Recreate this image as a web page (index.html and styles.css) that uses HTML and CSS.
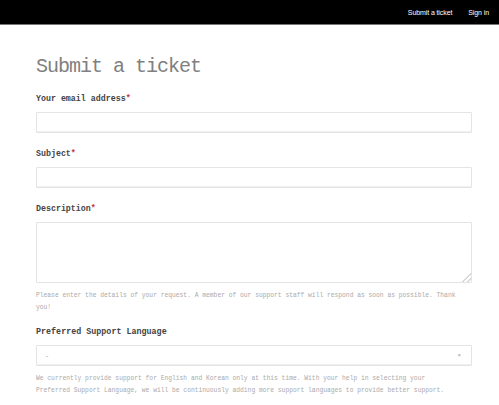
FILE: index.html
```html
<!DOCTYPE html>
<html>
<head>
<meta charset="utf-8">
<link rel="stylesheet" href="styles.css">
</head>
<body>
<header class="topbar">
  <nav class="nav">
    <a class="nav-link">Submit a ticket</a>
    <a class="nav-link">Sign in</a>
  </nav>
</header>
<main class="page">
  <h1 class="title">Submit a ticket</h1>
  <div class="field">
    <div class="label">Your email address<span class="req">*</span></div>
    <div class="input"></div>
  </div>
  <div class="field">
    <div class="label">Subject<span class="req">*</span></div>
    <div class="input"></div>
  </div>
  <div class="field field-tight">
    <div class="label">Description<span class="req">*</span></div>
    <textarea class="textarea"></textarea>
    <p class="help">Please enter the details of your request. A member of our support staff will respond as soon as possible. Thank you!</p>
  </div>
  <div class="field">
    <div class="label lang">Preferred Support Language</div>
    <div class="input select"><span class="dash">-</span><span class="arrow">×</span></div>
    <p class="help">We currently provide support for English and Korean only at this time. With your help in selecting your<br>Preferred Support Language, we will be continuously adding more support languages to provide better support.</p>
  </div>
</main>
</body>
</html>
```
FILE: styles.css
```css
html, body {
  margin: 0;
  padding: 0;
  background: #fff;
}
body {
  font-family: "Liberation Mono", monospace;
  color: #333;
}
.topbar {
  height: 24px;
  background: #000;
  border-bottom: 1px solid #777;
  display: flex;
  justify-content: flex-end;
  align-items: center;
}
.nav {
  display: flex;
  gap: 16px;
  padding-right: 10px;
}
.nav-link {
  font-family: "Liberation Sans", Arial, sans-serif;
  font-size: 7px;
  color: #fff;
  letter-spacing: -0.1px;
}
.page {
  padding: 0 27px 0 36px;
}
.title {
  margin: 30px 0 0 0;
  font-size: 20px;
  line-height: 24px;
  letter-spacing: -1px;
  font-weight: normal;
  color: #808080;
}
.field {
  margin-bottom: 15px;
}
.field:first-of-type {
  margin-top: 14px;
}
.field-tight {
  margin-bottom: 12px;
}
.label {
  font-size: 8.3px;
  line-height: 12px;
  font-weight: bold;
  color: #444;
  margin-bottom: 7px;
}
.label.lang {
  font-size: 8.4px;
  margin-bottom: 7px;
}
.req {
  color: #c0394b;
}
.input {
  height: 19px;
  border: 1px solid #e4e4e4;
  border-radius: 1px;
  box-shadow: inset 0 -1px 0 #f0f0f0;
}
.textarea {
  display: block;
  box-sizing: border-box;
  width: 100%;
  height: 61px;
  margin: 0;
  border: 1px solid #e4e4e4;
  border-radius: 1px;
  outline: none;
  resize: vertical;
}
.textarea::-webkit-resizer {
  background: linear-gradient(135deg, transparent 70%, #d8d8d8 70%, #d8d8d8 76%, transparent 76%, transparent 86%, #d8d8d8 86%, #d8d8d8 92%, transparent 92%);
}
.help {
  margin: 7px 0 0 0;
  font-size: 6.3px;
  line-height: 12px;
  color: #aaa;
}
.select {
  display: flex;
  justify-content: space-between;
  align-items: center;
  padding: 0 10px 0 8px;
  font-size: 7px;
  color: #aaa;
}
.arrow {
  font-size: 6px;
  color: #999;
}
```
